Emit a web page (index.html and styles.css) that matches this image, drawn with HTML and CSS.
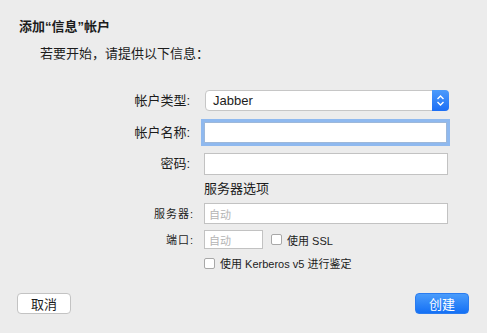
FILE: index.html
```html
<!DOCTYPE html>
<html lang="zh-CN">
<head>
  <meta charset="UTF-8" />
  <title>添加“信息”帐户</title>
  <link rel="stylesheet" href="styles.css">
</head>
<body>
  <div class="dialog">
    <h1 class="title">添加“信息”帐户</h1>
    <p class="intro">若要开始，请提供以下信息：</p>

    <div class="form">
      <div class="row row-type">
        <label class="label">帐户类型:</label>
        <div class="popup">
          <span>Jabber</span>
          <span class="stepper">
            <svg width="9" height="13" viewBox="0 0 9 13">
              <path d="M1.5 5 L4.5 2 L7.5 5 M1.5 8 L4.5 11 L7.5 8" fill="none" stroke="#fff" stroke-width="1.4"/>
            </svg>
          </span>
        </div>
      </div>

      <div class="row row-name">
        <label class="label">帐户名称:</label>
        <div class="field focused"></div>
      </div>

      <div class="row row-pass">
        <label class="label">密码:</label>
        <div class="field"></div>
      </div>

      <div class="row row-section">
        <span class="label"></span>
        <div class="section">服务器选项</div>
      </div>

      <div class="row row-server">
        <label class="label small">服务器:</label>
        <div class="field mini"><span class="placeholder">自动</span></div>
      </div>

      <div class="row row-port">
        <label class="label small">端口:</label>
        <div class="field mini port"><span class="placeholder">自动</span></div>
        <span class="check ssl"></span>
        <span class="check-text">使用 SSL</span>
      </div>

      <div class="row row-kerberos">
        <span class="label"></span>
        <span class="check"></span>
        <span class="check-text">使用 Kerberos v5 进行鉴定</span>
      </div>
    </div>

    <div class="buttons">
      <button class="btn">取消</button>
      <button class="btn primary">创建</button>
    </div>
  </div>
</body>
</html>
```

FILE: styles.css
```css
* {
  box-sizing: border-box;
  margin: 0;
  padding: 0;
}

body {
  font-family: 'Liberation Sans', 'Noto Sans CJK SC', sans-serif;
  background-color: #ececec;
  color: #1c1c1c;
  width: 487px;
  height: 333px;
  overflow: hidden;
}

.dialog {
  padding: 18px 17px 0 17px;
  height: 333px;
  display: flex;
  flex-direction: column;
}

.title {
  font-size: 13px;
  font-weight: bold;
  line-height: 18px;
  margin-left: 2px;
}

.intro {
  font-size: 13px;
  line-height: 18px;
  margin: 9px 0 0 23px;
}

.form {
  margin-top: 27px;
}

.row {
  display: flex;
  align-items: center;
}

.row-name { margin-top: 11px; }
.row-pass { margin-top: 10px; }
.row-section { margin-top: 6px; }
.row-server { margin-top: 6px; }
.row-port { margin-top: 6px; }
.row-kerberos { margin-top: 6px; }

.label {
  width: 173px;
  margin-right: 14px;
  font-size: 13px;
  text-align: right;
  line-height: 16px;
  flex-shrink: 0;
}

.label.small {
  width: 177px;
  margin-right: 10px;
  font-size: 11px;
  letter-spacing: 1px;
}

.popup {
  width: 244px;
  height: 21px;
  background: #fff;
  border: 1px solid #c6c6c6;
  border-radius: 4px;
  display: flex;
  align-items: center;
  justify-content: space-between;
  font-size: 13px;
  padding-left: 7px;
  margin-left: 1px;
}

.stepper {
  width: 17px;
  height: 21px;
  margin: -1px -1px -1px 0;
  background: linear-gradient(#4c9bfb, #1c6ef5);
  border-radius: 0 4px 4px 0;
  display: flex;
  align-items: center;
  justify-content: center;
}

.field {
  height: 22px;
  width: 244px;
  background: #fff;
  border: 1px solid #c2c2c2;
}

.field.focused {
  height: 21px;
  width: 243px;
  border-color: #9db8da;
  box-shadow: 0 0 0 3px #8fb9ef;
}

.section {
  font-size: 13px;
  line-height: 16px;
}

.field.mini {
  height: 21px;
  font-size: 11px;
  padding-left: 4px;
  display: flex;
  align-items: center;
}

.placeholder {
  color: #b4b4b4;
}

.field.mini.port {
  width: 59px;
  height: 19px;
}

.check {
  width: 11px;
  height: 11px;
  background: #fff;
  border: 1px solid #a8a8a8;
  border-radius: 2px;
  flex-shrink: 0;
}

.check.ssl {
  margin-left: 8px;
}

.check-text {
  font-size: 11px;
  margin-left: 5px;
}

.buttons {
  display: flex;
  justify-content: space-between;
  margin-top: auto;
  margin-bottom: 19px;
  padding-right: 1px;
}

.btn {
  width: 54px;
  height: 21px;
  font-family: 'Liberation Sans', 'Noto Sans CJK SC', sans-serif;
  font-size: 13px;
  background: #fff;
  border: 1px solid #c3c3c3;
  border-radius: 4px;
  color: #1c1c1c;
}

.btn.primary {
  background: linear-gradient(#4a9cfb, #1470f5);
  border-color: #2a7cf0;
  color: #fff;
}
```
